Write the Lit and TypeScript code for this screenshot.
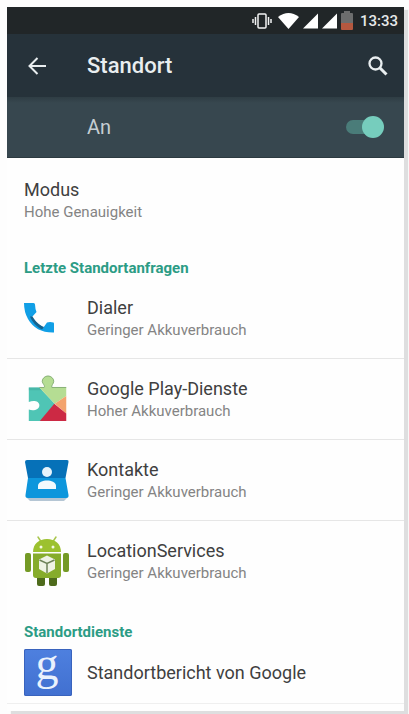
import { LitElement, html, css, TemplateResult } from "lit";
import { customElement, state } from "lit/decorators.js";

interface AppEntry {
  name: string;
  usage: string;
  icon: TemplateResult;
}

const dialerIcon = html`<svg class="glyph" viewBox="0 0 48 52" aria-hidden="true">
  <path fill="#119fe6" d="M0 11H9.500Q11 11 11 12.500Q11.200 17 12.500 20L8 25C11.500 30 15 33 19.500 35.500L23 30.500Q26 29.500 29.500 30.500Q30 30.800 30 32V40.500Q12 41 4 27Q0 20 0 11Z"/>
  <path fill="#17618c" d="M6 24.500L8.500 24.500C12 30 15 33 20 35L18 37.500C13 35 8 30 6 24.500Z"/>
</svg>`;

const playIcon = html`<svg class="glyph" viewBox="-3 -1 50 54" aria-hidden="true">
  <path fill="#4fc5b5" d="M2 14H13L29 31L15 49H2V37C7 39 13 37 13 32.500C13 28 7 27 2 29Z"/>
  <path fill="#3fa99c" d="M2 14H13L16 17H2Z" opacity=".5"/>
  <path fill="#b5dd93" d="M13 14H18C19.500 12 16 10 16 7.500C16 4.500 19 2 22 2C25 2 28 4.500 28 7.500C28 10 25 12 26 14H41V23L29 31Z"/>
  <path fill="none" stroke="#84ad73" d="M13 14H18C19.500 12 16 10 16 7.500C16 4.500 19 2 22 2C25 2 28 4.500 28 7.500C28 10 25 12 26 14H41"/>
  <path fill="#f3a36d" d="M41 23V41L29 31Z"/>
  <path fill="#cc2944" d="M28.500 31L41 41V49H13.500Z"/>
</svg>`;

const contactsIcon = html`<svg class="glyph" viewBox="0 0 48 52" aria-hidden="true">
  <path fill="#b5c6d4" d="M2 43H44L40 47H6Z"/>
  <path fill="#0671b8" d="M1 8Q1 6 3 6H43Q45 6 44.500 8L41.500 24H4Z"/>
  <path fill="#0d96dc" d="M4 24H41.500L44.500 41Q45 44 42 44H4Q1 44 1.500 41Z"/>
  <circle cx="23" cy="18" r="5" fill="#e6f3fb"/>
  <path fill="#f3fafd" d="M14 35V32C14 28 19 26.500 23 26.500S32 28 32 32V35Z"/>
</svg>`;

const androidIcon = html`<svg class="glyph" viewBox="0 0 48 52" aria-hidden="true">
  <path stroke="#a8c64c" stroke-width="1.500" stroke-linecap="round" d="M14 2L18 8M32 2L28 8"/>
  <rect x="13" y="38" width="8" height="13" rx="2" fill="#4e6b1c"/>
  <rect x="25" y="38" width="8" height="13" rx="2" fill="#4e6b1c"/>
  <rect x="1" y="18" width="6" height="19" rx="2" fill="#749a25"/>
  <rect x="39" y="18" width="6" height="19" rx="2" fill="#749a25"/>
  <path fill="#9cc12f" d="M9 17C9 9 15 4 23 4S37 9 37 17Z"/>
  <path fill="#86ac2b" d="M9 18.500H37V40Q37 43 34 43H12Q9 43 9 40Z"/>
  <circle cx="17" cy="12" r="1.500" fill="#f4f9e4"/>
  <circle cx="29" cy="12" r="1.500" fill="#f4f9e4"/>
  <path fill="#eef2e4" d="M23 20.500L31 24.500V34L23 38.500L15 34V24.500Z"/>
  <path fill="none" stroke="#6d8158" stroke-width="1.500" d="M15.500 25L23 28.500L30.500 25M23 28.500V38"/>
</svg>`;

const signalIcon = html`<svg class="signal" viewBox="0 0 16 16" aria-hidden="true">
  <path fill="#fff" d="M16 0V16H0Z"/>
</svg>`;

@customElement("app-root")
export class AppRoot extends LitElement {
  @state() private enabled = true;

  private readonly apps: AppEntry[] = [
    { name: "Dialer", usage: "Geringer Akkuverbrauch", icon: dialerIcon },
    { name: "Google Play-Dienste", usage: "Hoher Akkuverbrauch", icon: playIcon },
    { name: "Kontakte", usage: "Geringer Akkuverbrauch", icon: contactsIcon },
    { name: "LocationServices", usage: "Geringer Akkuverbrauch", icon: androidIcon },
  ];

  static styles = css`
    :host {
      display: block;
      box-sizing: border-box;
      padding: 7px 5px 3px 7px;
      background: #fdfdfd;
      font-family: Roboto, "Liberation Sans", sans-serif;
      color: #404040;
    }
    * { box-sizing: border-box; }
    h1, h2, p, ul { margin: 0; padding: 0; font-weight: 400; }
    ul { list-style: none; }
    button { border: 0; padding: 0; background: none; font: inherit; color: inherit; text-align: left; cursor: pointer; }
    svg { display: block; flex: none; }

    .screen { background: #fefefe; box-shadow: 4px 3px 1px #dededf; }

    .status {
      display: flex;
      align-items: center;
      justify-content: flex-end;
      gap: 4px;
      height: 27px;
      padding: 0 6px;
      background: #212628;
      color: #e6e8e8;
      font-size: 15px;
      font-weight: 500;
    }
    .vibrate { width: 20px; height: 18px; margin-right: 2px; }
    .wifi { width: 21px; height: 16px; }
    .signal { width: 15px; height: 16px; }
    .battery { width: 12px; height: 19px; }
    .clock { margin-left: 3px; }

    .toolbar {
      display: flex;
      align-items: center;
      height: 63px;
      padding: 0 12px 0 18px;
      background: #26323a;
      color: #e9eef0;
    }
    .title { flex: 1; font-size: 22px; line-height: 24px; font-weight: 500; }
    .icon-button { display: flex; align-items: center; }
    .back { width: 62px; height: 40px; }
    .search { width: 28px; height: 40px; justify-content: center; }

    .master {
      display: flex;
      align-items: center;
      justify-content: space-between;
      height: 61px;
      padding: 0 20px 0 80px;
      background: linear-gradient(#2f3d44, #37474f 6px);
      border-bottom: 1px solid #2c3a40;
      color: #c5ced2;
      font-size: 20px;
    }
    .switch {
      appearance: none;
      display: flex;
      align-items: center;
      width: 38px;
      height: 22px;
      margin: 0;
      border-radius: 11px;
      cursor: pointer;
    }
    .switch::before {
      content: "";
      width: 30px;
      height: 14px;
      border-radius: 7px;
      background: #4a7c79;
    }
    .switch::after {
      content: "";
      width: 22px;
      height: 22px;
      margin-left: -30px;
      border-radius: 50%;
      background: #b9c1c4;
    }
    .switch:checked::after { margin-left: -14px; background: #76cdbd; }

    .row { display: flex; align-items: center; width: 100%; padding: 0 17px; }
    .mode { height: 80px; padding-top: 4px; }
    .entry { height: 81px; border-bottom: 1px solid #e6e6e6; }
    li:last-child .entry { border-bottom-color: transparent; }
    .service { height: 62px; border-bottom: 1px solid #efefef; }
    .icon { flex: none; width: 63px; }
    .glyph { width: 48px; height: 52px; }
    .name, .detail { display: block; }
    .name { font-size: 18px; line-height: 24px; }
    .detail { font-size: 15px; line-height: 20px; color: #848484; }
    .category {
      display: flex;
      align-items: flex-end;
      height: 40px;
      padding: 0 17px;
      font-size: 15px;
      line-height: 20px;
      font-weight: 700;
      color: #2c9c85;
    }
    .google {
      width: 48px;
      height: 47px;
      overflow: visible;
      border-radius: 2px;
      background: linear-gradient(#4e80df, #4170d0);
      box-shadow: inset 0 0 0 1px #3963bd;
      fill: #eaf2fd;
      font-family: "Liberation Serif", serif;
      font-size: 46px;
    }
    .end { height: 7px; }
  `;

  private toggle(event: Event) {
    this.enabled = (event.target as HTMLInputElement).checked;
  }

  private renderStatus() {
    return html`<div class="status">
      <svg class="vibrate" viewBox="0 0 20 18" aria-hidden="true">
        <g fill="none" stroke="#f2f3f3" stroke-width="1.500">
          <rect x="6" y="2" width="8" height="14" rx="1"/>
          <path d="M3.500 5V13M1 7V11M16.500 5V13M19 7V11"/>
        </g>
      </svg>
      <svg class="wifi" viewBox="0 0 21 16" aria-hidden="true">
        <path fill="#fff" d="M10.500 16L0 4Q10.500-4 21 4Z"/>
      </svg>
      ${signalIcon}${signalIcon}
      <svg class="battery" viewBox="0 0 12 19" aria-hidden="true">
        <path fill="#6c6d6d" d="M3 0H9V2H11Q12 2 12 3V12H0V3Q0 2 1 2H3Z"/>
        <path fill="#b4583f" d="M0 12H12V18Q12 19 11 19H1Q0 19 0 18Z"/>
      </svg>
      <span class="clock">13:33</span>
    </div>`;
  }

  render() {
    return html`<main class="screen">
      ${this.renderStatus()}
      <header class="toolbar">
        <button class="icon-button back" aria-label="Zurück">
          <svg width="24" height="20" viewBox="0 0 24 20" fill="none" stroke="currentColor" stroke-width="2">
            <path d="M21 10H5M12.500 2L4.500 10L12.500 18"/>
          </svg>
        </button>
        <h1 class="title">Standort</h1>
        <button class="icon-button search" aria-label="Suchen">
          <svg width="20" height="20" viewBox="0 0 20 20" fill="none" stroke="currentColor">
            <circle cx="7.500" cy="7.500" r="6" stroke-width="2.300"/>
            <path d="M12 12L18.500 18.500" stroke-width="3"/>
          </svg>
        </button>
      </header>
      <div class="master">
        <label for="location">An</label>
        <input class="switch" id="location" type="checkbox" role="switch" .checked=${this.enabled} @change=${this.toggle}>
      </div>
      <button class="row mode">
        <span><span class="name">Modus</span><span class="detail">Hohe Genauigkeit</span></span>
      </button>
      <h2 class="category">Letzte Standortanfragen</h2>
      <ul>
        ${this.apps.map((app) => html`<li>
          <button class="row entry">
            <span class="icon">${app.icon}</span>
            <span><span class="name">${app.name}</span><span class="detail">${app.usage}</span></span>
          </button>
        </li>`)}
      </ul>
      <h2 class="category">Standortdienste</h2>
      <button class="row service">
        <span class="icon">
          <svg class="google" viewBox="0 0 48 47" aria-hidden="true">
            <text x="23" y="30" text-anchor="middle">g</text>
          </svg>
        </span>
        <span class="name">Standortbericht von Google</span>
      </button>
      <div class="end"></div>
    </main>`;
  }
}
